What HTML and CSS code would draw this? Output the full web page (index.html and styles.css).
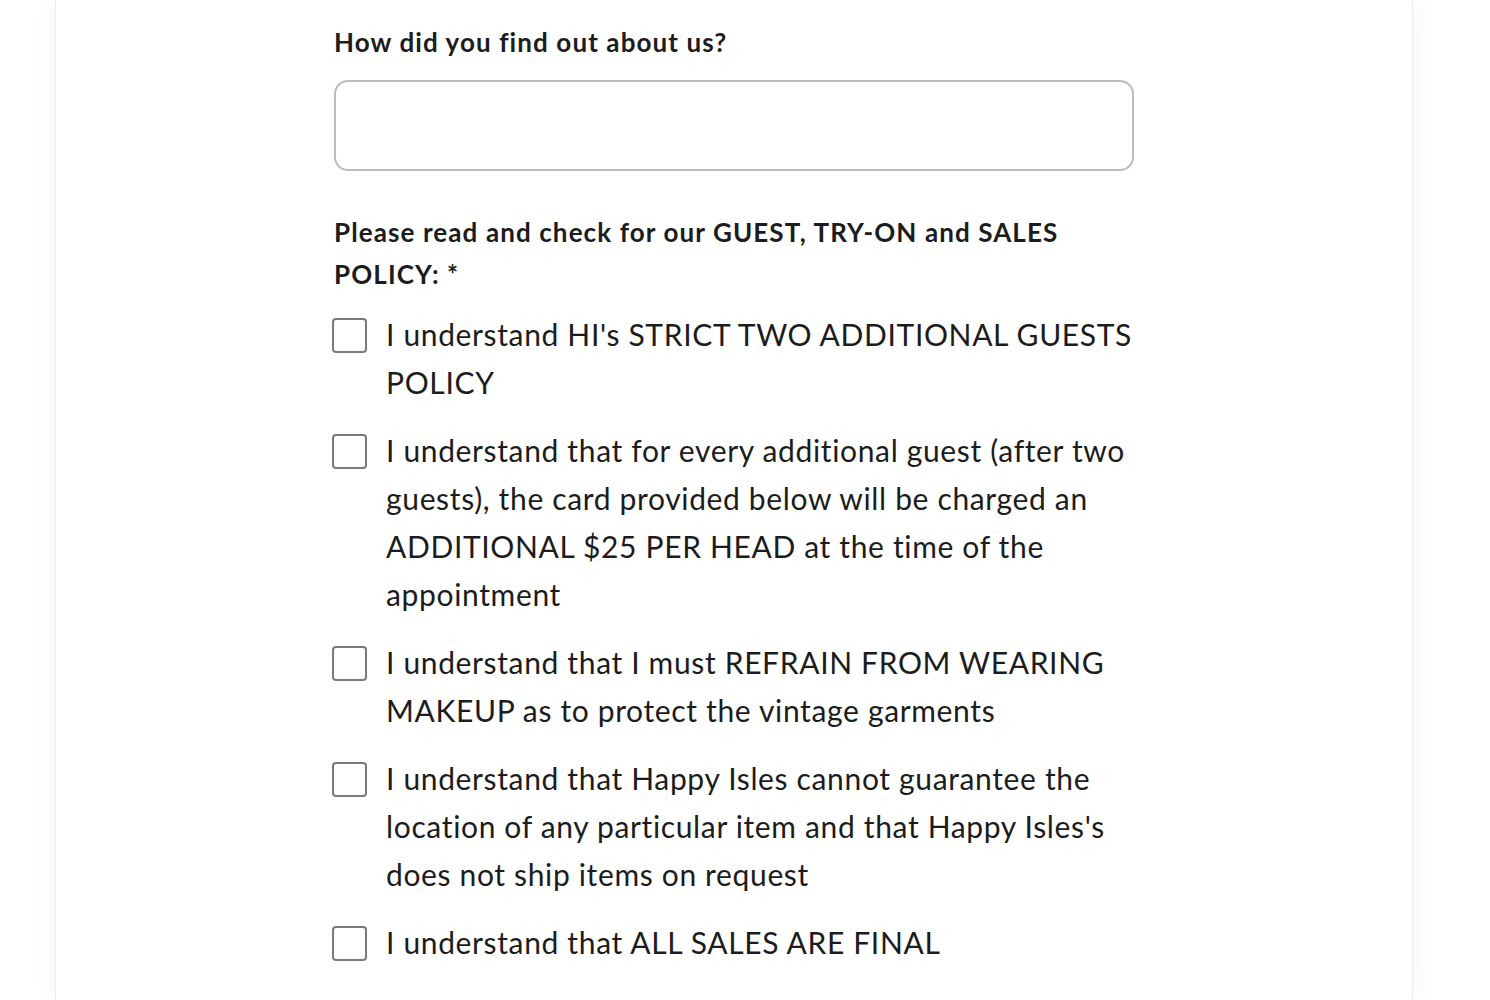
FILE: index.html
```html
<!DOCTYPE html>
<html lang="en">
<head>
<meta charset="utf-8">
<title>Appointment form</title>
<link rel="stylesheet" href="styles.css">
</head>
<body>
<div class="page">
  <div class="card">
    <form class="form">
      <div class="field">
        <label class="label" for="source">How did you find out about us?</label>
        <input class="text-input" id="source" type="text">
      </div>
      <div class="field policies">
        <div class="label">Please read and check for our GUEST, TRY-ON and SALES POLICY: *</div>
        <ul class="checks">
          <li class="check"><span class="box"></span><span class="check-text">I understand HI's STRICT TWO ADDITIONAL GUESTS POLICY</span></li>
          <li class="check"><span class="box"></span><span class="check-text">I understand that for every additional guest (after two guests), the card provided below will be charged an ADDITIONAL $25 PER HEAD at the time of the appointment</span></li>
          <li class="check"><span class="box"></span><span class="check-text">I understand that I must REFRAIN FROM WEARING MAKEUP as to protect the vintage garments</span></li>
          <li class="check"><span class="box"></span><span class="check-text">I understand that Happy Isles cannot guarantee the location of any particular item and that Happy Isles's does not ship items on request</span></li>
          <li class="check"><span class="box"></span><span class="check-text">I understand that ALL SALES ARE FINAL</span></li>
        </ul>
      </div>
    </form>
  </div>
</div>
</body>
</html>
```

FILE: styles.css
```css
html, body {
  margin: 0;
  padding: 0;
  background: #ffffff;
  height: 1000px;
  overflow: hidden;
}
body {
  font-family: "Lato", "Open Sans", sans-serif;
  color: #1c1c1c;
}
.page {
  display: flex;
  height: 100%;
}
.card {
  margin-left: 56px;
  width: 1356px;
  height: 100%;
  background: #fff;
  box-shadow: 0 0 0 1px #ececec, 0 0 24px rgba(0,0,0,0.06);
}
.form {
  margin-left: 278px;
  width: 800px;
  padding-top: 21px;
}
.label {
  display: block;
  font-weight: 700;
  font-size: 26px;
  line-height: 42px;
  letter-spacing: 1.1px;
}
.text-input {
  display: block;
  box-sizing: border-box;
  width: 800px;
  height: 91px;
  margin-top: 17px;
  border: 2px solid #bcbcbc;
  border-radius: 14px;
  background: #fff;
  outline: none;
}
.policies {
  margin-top: 40px;
}
.checks {
  list-style: none;
  margin: 15px 0 0;
  padding: 0;
  display: flex;
  flex-direction: column;
  gap: 20px;
}
.check {
  display: flex;
  align-items: flex-start;
  gap: 19px;
  font-size: 30px;
  line-height: 48px;
  letter-spacing: 0.65px;
}
.check-text {
  flex: 1;
}
.box {
  flex: none;
  box-sizing: border-box;
  width: 35px;
  height: 35px;
  margin-top: 8px;
  margin-left: -2px;
  border: 2px solid #7a7a7a;
  border-radius: 4px;
}
```
